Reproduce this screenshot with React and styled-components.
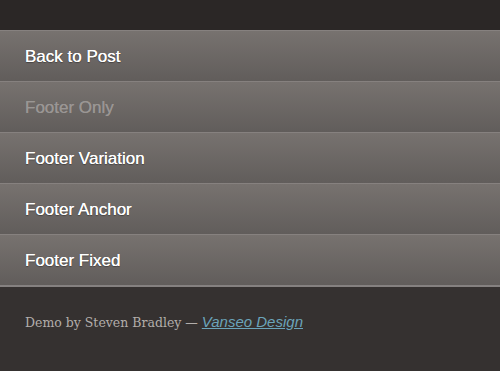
import React from "react";
import styled, { createGlobalStyle } from "styled-components";

const GlobalStyle = createGlobalStyle`
  html, body {
    margin: 0;
    padding: 0;
    background: #353130;
  }
`;

const links = [
  { label: "Back to Post" },
  { label: "Footer Only", current: true },
  { label: "Footer Variation" },
  { label: "Footer Anchor" },
  { label: "Footer Fixed" },
];

const App = () => {
  return (
    <Page>
      <GlobalStyle />
      <TopBar />
      <Nav>
        {links.map((l) => (
          <NavItem key={l.label} $current={l.current}>
            {l.label}
          </NavItem>
        ))}
      </Nav>
      <Footer>
        <Credit>
          Demo by Steven Bradley — <CreditLink href="#">Vanseo Design</CreditLink>
        </Credit>
      </Footer>
    </Page>
  );
};

export default App;

const Page = styled.div`
  width: 500px;
  min-height: 371px;
  background: #353130;
  display: flex;
  flex-direction: column;
`;

const TopBar = styled.div`
  height: 30px;
  background: #2b2726;
`;

const Nav = styled.nav`
  display: flex;
  flex-direction: column;
  border-bottom: 2px solid #858180;
`;

const NavItem = styled.a`
  display: flex;
  align-items: center;
  height: 48px;
  padding: 2px 25px 0;
  border-top: 1px solid #86817f;
  background: linear-gradient(to bottom, #77726f 0%, #615d5b 100%);
  font-family: "Liberation Sans", Arial, sans-serif;
  font-size: 17px;
  color: ${(p) => (p.$current ? "#9a9694" : "#ffffff")};
  text-shadow: ${(p) =>
    p.$current
      ? "0 0 0.4px #9a9694"
      : "0 0 0.5px #ffffff, 0 1px 1px rgba(0,0,0,0.35)"};
  text-decoration: none;
`;

const Footer = styled.footer`
  flex: 1;
  padding: 26px 25px;
`;

const Credit = styled.p`
  margin: 0;
  font-family: "DejaVu Serif", Georgia, serif;
  font-size: 12.5px;
  color: #b3aeab;
`;

const CreditLink = styled.a`
  font-family: "Liberation Sans", Arial, sans-serif;
  font-size: 15px;
  font-style: italic;
  color: #6ba4ba;
  text-decoration: underline;
`;
